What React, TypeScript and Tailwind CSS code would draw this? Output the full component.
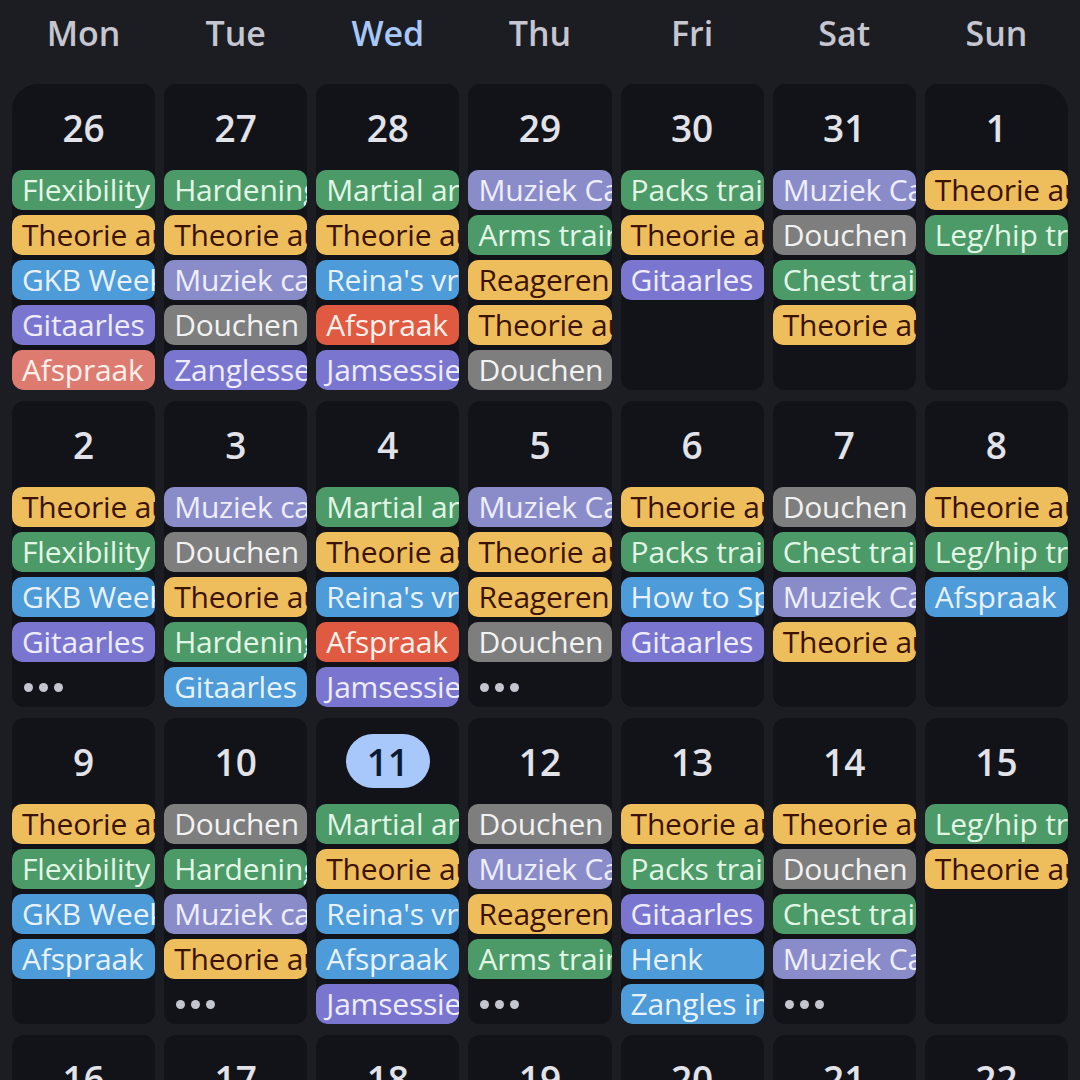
import React from "react";

type Color = "green" | "yellow" | "blue" | "purple" | "lavender" | "gray" | "salmon" | "red";

const chipStyles: Record<Color, string> = {
  green: "bg-[#4c9a67] text-[#e2f6e6]",
  yellow: "bg-[#efbe5c] text-[#3b1300]",
  blue: "bg-[#4d9bd8] text-[#e8f2ff]",
  purple: "bg-[#7a76cf] text-[#eeecff]",
  lavender: "bg-[#8a8cca] text-[#eeeeff]",
  gray: "bg-[#7e7e7e] text-[#f2f2f2]",
  salmon: "bg-[#de7b70] text-[#fff0ec]",
  red: "bg-[#df5a40] text-[#fff0ec]",
};

type Ev = [string, Color];
type Day = { n: number; events: Ev[]; more?: boolean; today?: boolean };

const weeks: Day[][] = [
  [
    { n: 26, events: [["Flexibility", "green"], ["Theorie auto", "yellow"], ["GKB Weekly", "blue"], ["Gitaarles", "purple"], ["Afspraak", "salmon"]] },
    { n: 27, events: [["Hardening", "green"], ["Theorie auto", "yellow"], ["Muziek cafe", "lavender"], ["Douchen", "gray"], ["Zanglessen", "purple"]] },
    { n: 28, events: [["Martial arts", "green"], ["Theorie auto", "yellow"], ["Reina's vrij", "blue"], ["Afspraak", "red"], ["Jamsessie", "purple"]] },
    { n: 29, events: [["Muziek Cafe", "lavender"], ["Arms training", "green"], ["Reageren", "yellow"], ["Theorie auto", "yellow"], ["Douchen", "gray"]] },
    { n: 30, events: [["Packs training", "green"], ["Theorie auto", "yellow"], ["Gitaarles", "purple"]] },
    { n: 31, events: [["Muziek Cafe", "lavender"], ["Douchen", "gray"], ["Chest training", "green"], ["Theorie auto", "yellow"]] },
    { n: 1, events: [["Theorie auto", "yellow"], ["Leg/hip training", "green"]] },
  ],
  [
    { n: 2, events: [["Theorie auto", "yellow"], ["Flexibility", "green"], ["GKB Weekly", "blue"], ["Gitaarles", "purple"]], more: true },
    { n: 3, events: [["Muziek cafe", "lavender"], ["Douchen", "gray"], ["Theorie auto", "yellow"], ["Hardening", "green"], ["Gitaarles", "blue"]] },
    { n: 4, events: [["Martial arts", "green"], ["Theorie auto", "yellow"], ["Reina's vrij", "blue"], ["Afspraak", "red"], ["Jamsessie", "purple"]] },
    { n: 5, events: [["Muziek Cafe", "lavender"], ["Theorie auto", "yellow"], ["Reageren", "yellow"], ["Douchen", "gray"]], more: true },
    { n: 6, events: [["Theorie auto", "yellow"], ["Packs training", "green"], ["How to Speak", "blue"], ["Gitaarles", "purple"]] },
    { n: 7, events: [["Douchen", "gray"], ["Chest training", "green"], ["Muziek Cafe", "lavender"], ["Theorie auto", "yellow"]] },
    { n: 8, events: [["Theorie auto", "yellow"], ["Leg/hip training", "green"], ["Afspraak", "blue"]] },
  ],
  [
    { n: 9, events: [["Theorie auto", "yellow"], ["Flexibility", "green"], ["GKB Weekly", "blue"], ["Afspraak", "blue"]] },
    { n: 10, events: [["Douchen", "gray"], ["Hardening", "green"], ["Muziek cafe", "lavender"], ["Theorie auto", "yellow"]], more: true },
    { n: 11, today: true, events: [["Martial arts", "green"], ["Theorie auto", "yellow"], ["Reina's vrij", "blue"], ["Afspraak", "blue"], ["Jamsessie", "purple"]] },
    { n: 12, events: [["Douchen", "gray"], ["Muziek Cafe", "lavender"], ["Reageren", "yellow"], ["Arms training", "green"]], more: true },
    { n: 13, events: [["Theorie auto", "yellow"], ["Packs training", "green"], ["Gitaarles", "purple"], ["Henk", "blue"], ["Zangles in", "blue"]] },
    { n: 14, events: [["Theorie auto", "yellow"], ["Douchen", "gray"], ["Chest training", "green"], ["Muziek Cafe", "lavender"]], more: true },
    { n: 15, events: [["Leg/hip training", "green"], ["Theorie auto", "yellow"]] },
  ],
  [16, 17, 18, 19, 20, 21, 22].map((n) => ({ n, events: [] })),
];

const days = ["Mon", "Tue", "Wed", "Thu", "Fri", "Sat", "Sun"];

function DayCell({ day, corner }: { day: Day; corner: string }) {
  return (
    <div className={`h-[306px] bg-[#111318] overflow-hidden flex flex-col ${corner}`}>
      <div className="h-[86px] shrink-0 flex items-center justify-center">
        {day.today ? (
          <span className="w-[84px] h-[54px] rounded-full bg-[#a8c7fa] text-[#0b1a33] flex items-center justify-center text-[37px] font-semibold leading-none">
            {day.n}
          </span>
        ) : (
          <span className="text-[37px] font-semibold leading-none text-[#e2e2e9]">{day.n}</span>
        )}
      </div>
      <div className="flex flex-col gap-[5px]">
        {day.events.map(([title, color], i) => (
          <div
            key={i}
            className={`h-[40px] rounded-[10px] pl-[10px] flex items-center overflow-hidden whitespace-nowrap text-[30px] font-medium leading-none tracking-[-0.2px] ${chipStyles[color]}`}
          >
            {title}
          </div>
        ))}
        {day.more && (
          <div className="h-[40px] pl-[12px] flex items-center gap-[6px]">
            <span className="w-[9px] h-[9px] rounded-full bg-[#c4c6cf]" />
            <span className="w-[9px] h-[9px] rounded-full bg-[#c4c6cf]" />
            <span className="w-[9px] h-[9px] rounded-full bg-[#c4c6cf]" />
          </div>
        )}
      </div>
    </div>
  );
}

export default function App() {
  return (
    <div
      className="w-[1080px] h-[1080px] overflow-hidden bg-[#1c1d22] px-[12px]"
      style={{ fontFamily: '"Open Sans", Roboto, sans-serif' }}
    >
      <div className="grid grid-cols-7 gap-x-[9px] h-[66px]">
        {days.map((d) => (
          <div
            key={d}
            className={`flex items-center justify-center text-[34px] font-semibold ${d === "Wed" ? "text-[#a8c7fa]" : "text-[#c5c6d0]"}`}
          >
            {d}
          </div>
        ))}
      </div>
      <div className="grid grid-cols-7 gap-x-[9px] gap-y-[11px] mt-[18px]">
        {weeks.map((week, wi) =>
          week.map((day, di) => {
            let corner = "rounded-[12px]";
            if (wi === 0 && di === 0) corner = "rounded-[12px] rounded-tl-[26px]";
            if (wi === 0 && di === 6) corner = "rounded-[12px] rounded-tr-[28px]";
            return <DayCell key={`${wi}-${di}`} day={day} corner={corner} />;
          })
        )}
      </div>
    </div>
  );
}
